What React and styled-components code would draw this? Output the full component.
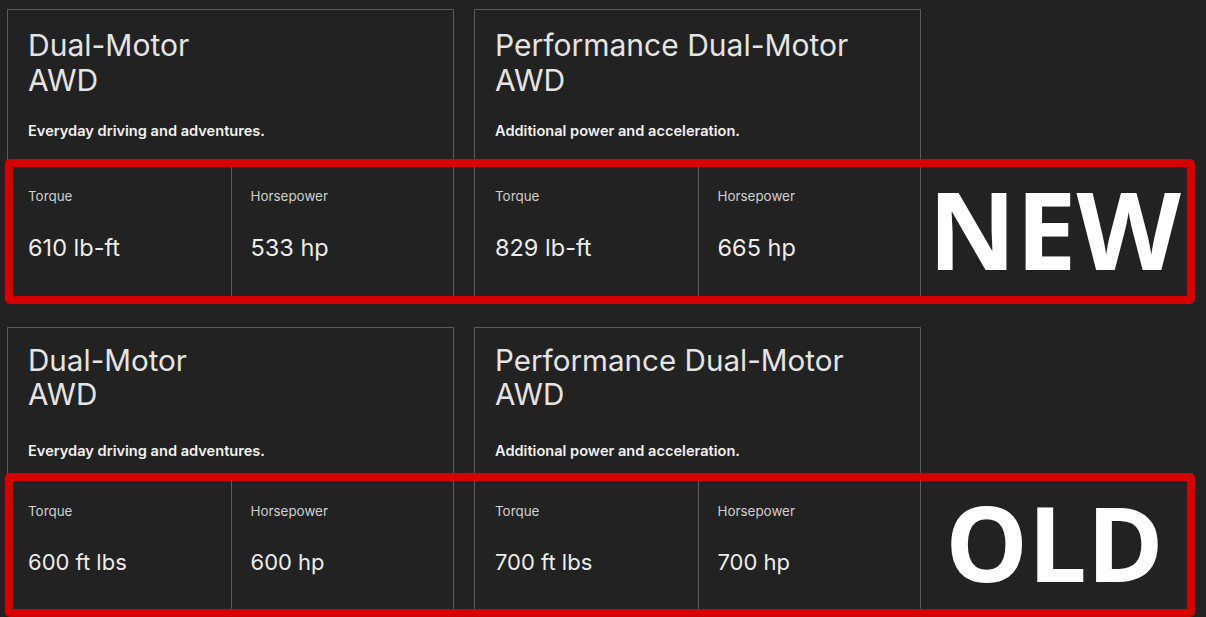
import styled, { createGlobalStyle } from "styled-components";

const GlobalStyle = createGlobalStyle`
  html, body {
    margin: 0;
    padding: 0;
    background: #222222;
  }
  body {
    font-family: Inter, "Noto Sans", sans-serif;
    -webkit-font-smoothing: antialiased;
  }
`;

// metrics differ a little between the two screenshots being compared
const metrics = {
  new: {
    titleSize: 30, titleLine: 35, headTop: 18, descGap: 23, headBottom: 22,
    cellTop: 22, valueSize: 23.5, valueGap: 28, cellBottom: 36,
  },
  old: {
    titleSize: 29.6, titleLine: 34.5, headTop: 14.5, descGap: 29.5, headBottom: 18,
    cellTop: 20.5, valueSize: 22, valueGap: 27.5, cellBottom: 36,
  },
};

const Page = styled.div`
  width: 1206px;
`;

const Section = styled.section`
  position: relative;
  height: ${p => p.$height}px;
  padding-top: 9px;
  box-sizing: border-box;
  overflow: hidden;
`;

const CardRow = styled.div`
  display: flex;
  gap: 20px;
  padding-left: 7px;
`;

const Card = styled.div`
  width: 447px;
  border: 1px solid #5b5b5b;
  box-sizing: border-box;
  background: #222222;
`;

const CardHead = styled.div`
  padding: ${p => p.$m.headTop}px 20px ${p => p.$m.headBottom}px;
`;

const Title = styled.h2`
  margin: 0;
  font-weight: 400;
  font-size: ${p => p.$m.titleSize}px;
  line-height: ${p => p.$m.titleLine}px;
  color: #e4e4e4;
  max-width: 370px;
`;

const Description = styled.p`
  margin: ${p => p.$m.descGap}px 0 0;
  font-size: 14.6px;
  line-height: 20px;
  font-weight: 600;
  color: #f0f0f0;
`;

const Stats = styled.div`
  display: grid;
  grid-template-columns: 1fr 1fr;
  border-top: 1px solid #5b5b5b;
`;

const Stat = styled.div`
  padding: ${p => p.$m.cellTop}px 20px ${p => p.$m.cellBottom}px 20px;
  & + & {
    border-left: 1px solid #5b5b5b;
    padding-left: 19px;
  }
`;

const StatLabel = styled.div`
  font-size: 13.4px;
  line-height: 20px;
  color: #cfcfcf;
`;

const StatValue = styled.div`
  margin-top: ${p => p.$m.valueGap}px;
  font-size: ${p => p.$m.valueSize}px;
  line-height: 28px;
  color: #ececec;
`;

const Highlight = styled.div`
  position: absolute;
  left: 5px;
  top: ${p => p.$top}px;
  width: 1190px;
  height: ${p => p.$h}px;
  border: 8.5px solid #d70000;
  border-radius: 5px;
  box-sizing: border-box;
  display: flex;
  justify-content: flex-end;
  align-items: center;
  box-shadow: 0 0 1px rgba(215, 0, 0, 0.6);
`;

const Tag = styled.div`
  width: 265px;
  text-align: center;
  font-family: "Open Sans", Inter, sans-serif;
  font-weight: 700;
  font-size: ${p => p.$size}px;
  line-height: 1;
  color: #ffffff;
  margin-top: -6px;
`;

const models = [
  { name: "Dual-Motor AWD", blurb: "Everyday driving and adventures." },
  { name: "Performance Dual-Motor AWD", blurb: "Additional power and acceleration." },
];

const sections = [
  {
    key: "new",
    tag: "NEW",
    height: 318,
    box: { top: 159, h: 145 },
    tagSize: 108,
    specs: [["610 lb-ft", "533 hp"], ["829 lb-ft", "665 hp"]],
  },
  {
    key: "old",
    tag: "OLD",
    height: 320,
    box: { top: 155, h: 144 },
    tagSize: 104,
    specs: [["600 ft lbs", "600 hp"], ["700 ft lbs", "700 hp"]],
  },
];

const ModelCard = ({ model, spec, m }) => (
  <Card>
    <CardHead $m={m}>
      <Title $m={m}>
        {model.name.replace(" AWD", "")}
        <br />
        AWD
      </Title>
      <Description $m={m}>{model.blurb}</Description>
    </CardHead>
    <Stats>
      <Stat $m={m}>
        <StatLabel>Torque</StatLabel>
        <StatValue $m={m}>{spec[0]}</StatValue>
      </Stat>
      <Stat $m={m}>
        <StatLabel>Horsepower</StatLabel>
        <StatValue $m={m}>{spec[1]}</StatValue>
      </Stat>
    </Stats>
  </Card>
);

export default function App() {
  return (
    <Page>
      <GlobalStyle />
      {sections.map(s => (
        <Section key={s.key} $height={s.height}>
          <CardRow>
            {models.map((model, i) => (
              <ModelCard key={model.name} model={model} spec={s.specs[i]} m={metrics[s.key]} />
            ))}
          </CardRow>
          <Highlight $top={s.box.top} $h={s.box.h}>
            <Tag $size={s.tagSize}>{s.tag}</Tag>
          </Highlight>
        </Section>
      ))}
    </Page>
  );
}
